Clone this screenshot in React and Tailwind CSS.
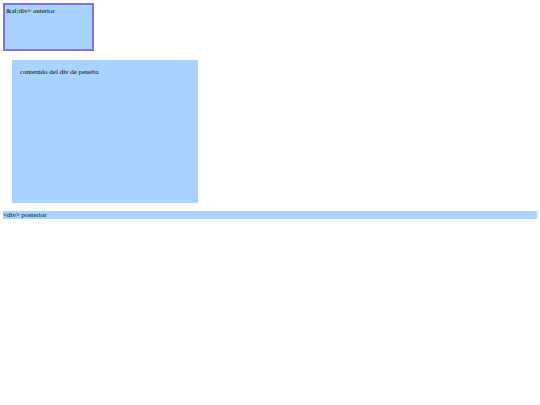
export default function App() {
  return (
    <div className="flex flex-col p-[3px] font-['Liberation_Serif',serif] text-[7px] leading-[8px] text-black">
      {/* caja anterior */}
      <div className="w-[91px] h-[48px] border-2 border-[#7f70ea] bg-[#a6d4fe] px-[1px] py-[2px]">
        &amp;al;div&gt; anterior
      </div>

      {/* div de prueba */}
      <div className="mt-[9px] ml-[9px] w-[186px] h-[143px] bg-[#a6d4fe] p-[8px]">
        contenido del div de peueba
      </div>

      {/* caja posterior */}
      <div className="mt-[8px] h-[8px] w-[534px] bg-[#a6d4fe]">
        &lt;div&gt; posterior
      </div>
    </div>
  );
}
